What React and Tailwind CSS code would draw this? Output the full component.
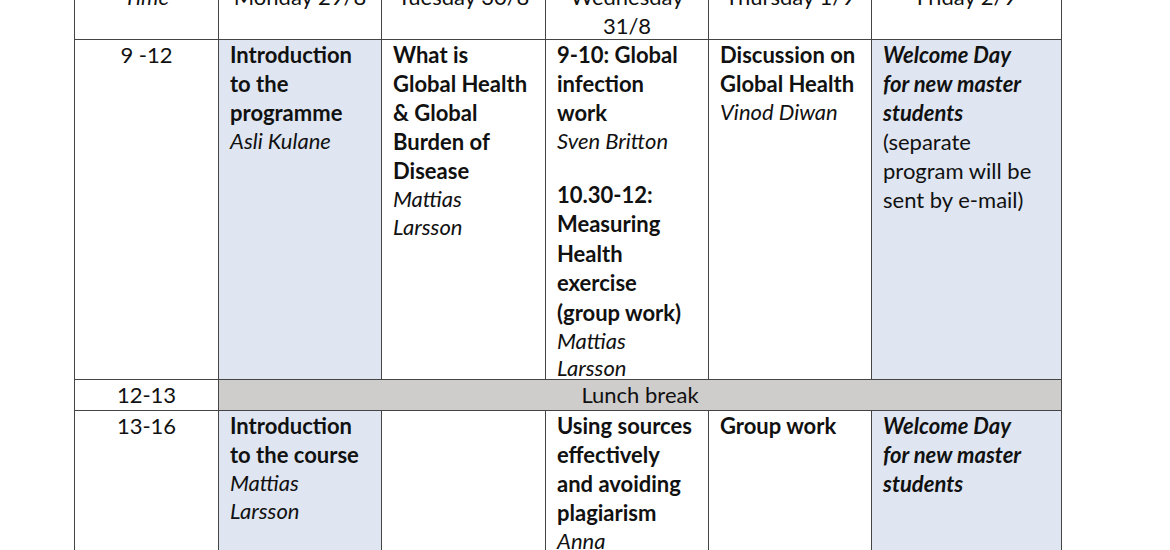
const font = { fontFamily: "Lato, 'Open Sans', sans-serif" };

function Title({ children }) {
  return <div className="font-bold leading-[29px]">{children}</div>;
}

function Teacher({ children }) {
  return <div className="italic leading-[27.5px]">{children}</div>;
}

function Cell({ blue, children, center }) {
  return (
    <div
      className={
        (blue ? "bg-[#dfe6f1] " : "bg-white ") +
        (center ? "text-center " : "px-[11px] ") +
        "overflow-hidden"
      }
    >
      {children}
    </div>
  );
}

export default function App() {
  return (
    <div className="w-[1170px] h-[550px] overflow-hidden bg-white text-[#111] text-[22px]" style={font}>
      <div className="ml-[74px] mt-[-19px] w-[988px] border border-[#444] bg-[#444] grid grid-cols-[143px_162px_163px_162px_162px_189px] grid-rows-[57px_339px_30px_200px] gap-px">
        {/* header */}
        <Cell center>
          <div className="italic leading-[29px]">Time</div>
        </Cell>
        <Cell center>
          <div className="leading-[29px]">Monday 29/8</div>
        </Cell>
        <Cell center>
          <div className="leading-[29px]">Tuesday 30/8</div>
        </Cell>
        <Cell center>
          <div className="leading-[29px]">Wednesday</div>
          <div className="leading-[29px]">31/8</div>
        </Cell>
        <Cell center>
          <div className="leading-[29px]">Thursday 1/9</div>
        </Cell>
        <Cell center>
          <div className="leading-[29px]">Friday 2/9</div>
        </Cell>

        {/* 9-12 */}
        <Cell center>
          <div className="leading-[29px]">9 -12</div>
        </Cell>
        <Cell blue>
          <Title>Introduction</Title>
          <Title>to the</Title>
          <Title>programme</Title>
          <Teacher>Asli Kulane</Teacher>
        </Cell>
        <Cell>
          <Title>What is</Title>
          <Title>Global Health</Title>
          <Title>&amp; Global</Title>
          <Title>Burden of</Title>
          <Title>Disease</Title>
          <Teacher>Mattias</Teacher>
          <Teacher>Larsson</Teacher>
        </Cell>
        <Cell>
          <Title>9-10: Global</Title>
          <Title>infection</Title>
          <Title>work</Title>
          <Teacher>Sven Britton</Teacher>
          <div className="h-[25px]" />
          <div className="font-bold leading-[29.5px]">10.30-12:</div>
          <div className="font-bold leading-[29.5px]">Measuring</div>
          <div className="font-bold leading-[29.5px]">Health</div>
          <div className="font-bold leading-[29.5px]">exercise</div>
          <div className="font-bold leading-[29.5px]">(group work)</div>
          <Teacher>Mattias</Teacher>
          <div className="italic leading-[26px]">Larsson</div>
        </Cell>
        <Cell>
          <Title>Discussion on</Title>
          <Title>Global Health</Title>
          <Teacher>Vinod Diwan</Teacher>
        </Cell>
        <Cell blue>
          <div className="font-bold italic leading-[29px]">Welcome Day</div>
          <div className="font-bold italic leading-[29px]">for new master</div>
          <div className="font-bold italic leading-[29px]">students</div>
          <div className="leading-[29px]">(separate</div>
          <div className="leading-[29px]">program will be</div>
          <div className="leading-[29px]">sent by e-mail)</div>
        </Cell>

        {/* lunch */}
        <Cell center>
          <div className="leading-[30px]">12-13</div>
        </Cell>
        <div className="col-span-5 bg-[#cfcccc] text-center leading-[30px]">Lunch break</div>

        {/* 13-16 */}
        <Cell center>
          <div className="leading-[29px]">13-16</div>
        </Cell>
        <Cell blue>
          <Title>Introduction</Title>
          <Title>to the course</Title>
          <Teacher>Mattias</Teacher>
          <Teacher>Larsson</Teacher>
        </Cell>
        <Cell></Cell>
        <Cell>
          <Title>Using sources</Title>
          <Title>effectively</Title>
          <Title>and avoiding</Title>
          <Title>plagiarism</Title>
          <Teacher>Anna</Teacher>
        </Cell>
        <Cell>
          <Title>Group work</Title>
        </Cell>
        <Cell blue>
          <div className="font-bold italic leading-[29px]">Welcome Day</div>
          <div className="font-bold italic leading-[29px]">for new master</div>
          <div className="font-bold italic leading-[29px]">students</div>
        </Cell>
      </div>
    </div>
  );
}
